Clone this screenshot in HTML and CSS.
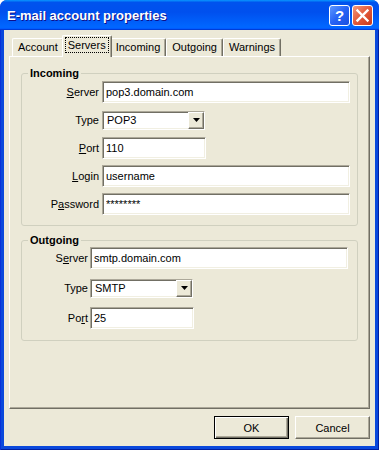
FILE: index.html
```html
<!DOCTYPE html>
<html lang="en">
<head>
    <meta charset="UTF-8">
    <title>E-mail account properties</title>
    <link rel="stylesheet" href="styles.css">
</head>
<body>
    <!-- dialog window -->
    <div class="window">
        <div class="titlebar">
            <span class="title">E-mail account properties</span>
            <div class="title-buttons">
                <button class="tb-btn help">?</button>
                <button class="tb-btn close">
                    <svg width="19" height="19" viewBox="0 0 19 19">
                        <path d="M4.5 4.5 L14.5 14.5 M14.5 4.5 L4.5 14.5" stroke="#fff" stroke-width="2.4" stroke-linecap="square"/>
                    </svg>
                </button>
            </div>
        </div>

        <div class="frame">
            <div class="client">
                <!-- tab strip -->
                <div class="tabs">
                    <div class="tab">Account</div>
                    <div class="tab active"><span class="focus">Servers</span></div>
                    <div class="tab">Incoming</div>
                    <div class="tab">Outgoing</div>
                    <div class="tab">Warnings</div>
                </div>

                <div class="panel">
                    <fieldset class="group incoming">
                        <legend>Incoming</legend>
                        <div class="form">
                            <label><u>S</u>erver</label>
                            <input class="edit" type="text" value="pop3.domain.com">

                            <label>Type</label>
                            <div class="combo">
                                <span class="value">POP3</span>
                                <span class="drop"><svg width="7" height="4" viewBox="0 0 7 4"><polygon points="0,0 7,0 3.5,4" fill="#000"/></svg></span>
                            </div>

                            <label><u>P</u>ort</label>
                            <input class="edit port" type="text" value="110">

                            <label><u>L</u>ogin</label>
                            <input class="edit" type="text" value="username">

                            <label>P<u>a</u>ssword</label>
                            <input class="edit" type="text" value="********">
                        </div>
                    </fieldset>

                    <fieldset class="group outgoing">
                        <legend>Outgoing</legend>
                        <div class="form">
                            <label>S<u>e</u>rver</label>
                            <input class="edit" type="text" value="smtp.domain.com">

                            <label>Type</label>
                            <div class="combo">
                                <span class="value">SMTP</span>
                                <span class="drop"><svg width="7" height="4" viewBox="0 0 7 4"><polygon points="0,0 7,0 3.5,4" fill="#000"/></svg></span>
                            </div>

                            <label>Po<u>r</u>t</label>
                            <input class="edit port" type="text" value="25">
                        </div>
                    </fieldset>
                </div>

                <!-- dialog buttons -->
                <div class="actions">
                    <button class="btn default">OK</button>
                    <button class="btn">Cancel</button>
                </div>
            </div>
        </div>
    </div>
</body>
</html>
```
FILE: styles.css
```css
* {
    box-sizing: border-box;
}

body {
    margin: 0;
    background: #fff;
    font-family: "Liberation Sans", Arial, sans-serif;
    font-size: 11px;
    color: #000;
}

/* window frame */
.window {
    width: 379px;
    height: 450px;
    display: flex;
    flex-direction: column;
    border-radius: 7px 7px 0 0;
    overflow: hidden;
    background: #0831d9;
}

.titlebar {
    height: 30px;
    flex: none;
    display: flex;
    align-items: center;
    justify-content: space-between;
    padding: 0 6px 0 7px;
    background: linear-gradient(180deg, #0997ff, #0053ee 8%, #0050ee 40%, #06f 88%, #06f 93%, #005bff 95%, #003dd7 96%, #003dd7);
}

.title {
    color: #fff;
    font-weight: bold;
    font-size: 13px;
    text-shadow: 1px 1px #0f1089;
}

.title-buttons {
    display: flex;
    gap: 2px;
}

.tb-btn {
    width: 21px;
    height: 21px;
    padding: 0;
    border: 1px solid #fff;
    border-radius: 3px;
    display: flex;
    align-items: center;
    justify-content: center;
    color: #fff;
}

.help {
    background: linear-gradient(135deg, #5c97ff, #2663f5 50%, #1a4fe0);
    font-family: "Liberation Sans", Arial, sans-serif;
    font-weight: bold;
    font-size: 15px;
}

.close {
    background: linear-gradient(135deg, #f29a7c, #e2593a 50%, #c8381a);
}

.frame {
    flex: 1;
    display: flex;
    padding: 0 4px 4px;
    background: #0a48dc;
    box-shadow: inset 1px 0 #0831d9, inset -1px 0 #001ea0, inset 0 -1px #001ea0;
}

.client {
    flex: 1;
    display: flex;
    flex-direction: column;
    padding: 5px 5px 7px;
    background: #ece9d8;
}

/* tabs */
.tabs {
    display: flex;
    align-items: flex-end;
    height: 21px;
    padding-left: 3px;
    position: relative;
    z-index: 1;
}

.tab {
    height: 18px;
    padding: 2px 5px 0;
    border: 1px solid;
    border-bottom: 0;
    border-color: #fff #716f64 #fff #fff;
    border-radius: 2px 2px 0 0;
    box-shadow: inset -1px 0 #aca899;
    background: #ece9d8;
    line-height: 13px;
    white-space: nowrap;
}

.tab.active {
    height: 22px;
    margin: 0 -2px -1px;
    padding: 1px 2px 0;
    position: relative;
    z-index: 1;
}

.focus {
    display: inline-block;
    border: 1px dotted #000;
    padding: 1px 2px 0;
    line-height: 13px;
}

.panel {
    flex: 1;
    padding: 10px 11px 0;
    border: 1px solid;
    border-color: #fff #716f64 #716f64 #fff;
    box-shadow: inset -1px -1px #aca899;
}

/* group boxes */
.group {
    margin: 0;
    padding: 0;
    border: 1px solid #d0d0bf;
    border-radius: 3px;
}

.group legend {
    margin-left: 6px;
    padding: 0 2px;
    font-weight: bold;
    line-height: 13px;
}

.group + .group {
    margin-top: 8px;
}

.form {
    display: grid;
    grid-auto-rows: 22px;
    align-items: center;
}

.incoming .form {
    grid-template-columns: 77px 1fr;
    column-gap: 3px;
    row-gap: 6px;
    padding: 1px 7px 10px 0;
}

.outgoing .form {
    grid-template-columns: 66px 1fr;
    column-gap: 2px;
    row-gap: 8px;
    padding: 0 9px 11px 0;
}

.form label {
    text-align: right;
}

.edit {
    width: 100%;
    height: 22px;
    margin: 0;
    padding: 0 3px;
    border: 1px solid;
    border-color: #aca899 #fff #fff #aca899;
    box-shadow: inset 1px 1px #716f64, inset -1px -1px #f1efe2;
    background: #fff;
    font: inherit;
    color: #000;
    outline: none;
}

.edit.port {
    width: 104px;
}

.combo {
    width: 103px;
    height: 19px;
    display: flex;
    align-items: center;
    border: 1px solid;
    border-color: #aca899 #fff #fff #aca899;
    box-shadow: inset 1px 1px #716f64, inset -1px -1px #f1efe2;
    background: #fff;
}

.combo .value {
    flex: 1;
    padding-left: 4px;
}

.drop {
    width: 16px;
    height: 17px;
    display: flex;
    align-items: center;
    justify-content: center;
    border: 1px solid;
    border-color: #fff #716f64 #716f64 #fff;
    box-shadow: inset -1px -1px #aca899;
    background: #ece9d8;
}

/* bottom buttons */
.actions {
    display: flex;
    justify-content: flex-end;
    gap: 6px;
    margin-top: 7px;
}

.btn {
    width: 75px;
    height: 23px;
    padding: 0;
    border: 1px solid;
    border-color: #fff #716f64 #716f64 #fff;
    box-shadow: inset -1px -1px #aca899;
    background: #ece9d8;
    font: inherit;
    color: #000;
}

.btn.default {
    border-color: #000;
    box-shadow: inset 1px 1px #fff, inset -1px -1px #716f64, inset -2px -2px #aca899;
}
```
